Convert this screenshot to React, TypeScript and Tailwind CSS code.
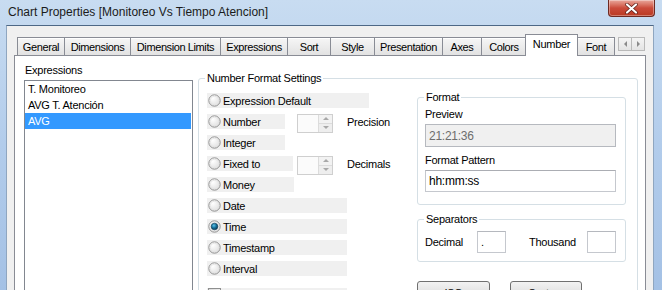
import React from 'react';

const tabs = [
  { name: 'General', w: 'w-[48px]' },
  { name: 'Dimensions', w: 'w-[67px]' },
  { name: 'Dimension Limits', w: 'w-[91px]' },
  { name: 'Expressions', w: 'w-[68px]' },
  { name: 'Sort', w: 'w-[44px]' },
  { name: 'Style', w: 'w-[45px]' },
  { name: 'Presentation', w: 'w-[69px]' },
  { name: 'Axes', w: 'w-[40px]' },
  { name: 'Colors', w: 'w-[46px]' },
];

const formats = [
  { name: 'Expression Default', w: 'w-[162px]' },
  { name: 'Number', w: 'w-[78px]', spin: 'Precision' },
  { name: 'Integer', w: 'w-[78px]' },
  { name: 'Fixed to', w: 'w-[86px]', spin: 'Decimals' },
  { name: 'Money', w: 'w-[87px]' },
  { name: 'Date', w: 'w-[140px]' },
  { name: 'Time', w: 'w-[140px]', checked: true },
  { name: 'Timestamp', w: 'w-[140px]' },
  { name: 'Interval', w: 'w-[140px]' },
];

function Radio({ checked }: { checked?: boolean }) {
  return (
    <svg width="13" height="13" viewBox="0 0 13 13" className="shrink-0">
      <defs>
        <radialGradient id="rg" cx="0.35" cy="0.3" r="0.8">
          <stop offset="0" stopColor="#ffffff" />
          <stop offset="1" stopColor="#dcdcdc" />
        </radialGradient>
        <radialGradient id="dot" cx="0.4" cy="0.35" r="0.7">
          <stop offset="0" stopColor="#5fc3e8" />
          <stop offset="0.5" stopColor="#16729c" />
          <stop offset="1" stopColor="#0a3550" />
        </radialGradient>
      </defs>
      <circle cx="6.5" cy="6.5" r="5.7" fill="url(#rg)" stroke="#8b8b8b" strokeWidth="0.9" />
      <circle cx="6.5" cy="6.5" r="4.2" fill="none" stroke="#e2e2e2" strokeWidth="0.8" />
      {checked && <circle cx="6.5" cy="6.5" r="3.3" fill="url(#dot)" stroke="#0b3b55" strokeWidth="0.6" />}
    </svg>
  );
}

function Spinner() {
  return (
    <div className="ml-[4px] mt-[3px] flex h-[19px] w-[36px] border border-[#cfcfcf] bg-[#fbfbfb]">
      <div className="flex-1" />
      <div className="flex w-[14px] flex-col border-l border-[#dcdcdc]">
        <div className="flex flex-1 items-center justify-center border-b border-[#dcdcdc] bg-[#f2f2f2]">
          <span className="h-0 w-0 border-x-[3px] border-b-[3px] border-x-transparent border-b-[#a8a8a8]" />
        </div>
        <div className="flex flex-1 items-center justify-center bg-[#eeeeee]">
          <span className="h-0 w-0 border-x-[3px] border-t-[3px] border-x-transparent border-t-[#a8a8a8]" />
        </div>
      </div>
    </div>
  );
}

export default function App() {
  return (
    <div className="flex h-[290px] w-[662px] flex-col overflow-hidden bg-gradient-to-b from-[#c8dcf1] via-[#b2cceb] to-[#a4c1e5] font-['Liberation_Sans',Arial,sans-serif] text-[11px] leading-[14px] tracking-[-0.25px] text-black">
      {/* Title bar */}
      <div className="flex h-[25px] shrink-0 items-start">
        <div className="ml-[8px] mt-[4px] text-[12px] leading-[16px] tracking-normal text-[#1b1b1b]">
          Chart Properties [Monitoreo Vs Tiempo Atencion]
        </div>
        <div className="ml-auto mr-[7px] flex h-[17px] w-[47px] items-center justify-center rounded-b-[4px] border border-t-0 border-[#6e2a22] bg-gradient-to-b from-[#e8a79c] via-[#cb4b3b] to-[#b93a22] shadow-[inset_0_0_0_1px_rgba(255,255,255,0.35)]">
          <svg width="13" height="11" viewBox="0 0 13 11">
            <path d="M2 1.5 L11 9.5 M11 1.5 L2 9.5" stroke="#5a1d16" strokeWidth="3.6" strokeLinecap="round" />
            <path d="M2 1.5 L11 9.5 M11 1.5 L2 9.5" stroke="#ffffff" strokeWidth="2.2" strokeLinecap="round" />
          </svg>
        </div>
      </div>

      {/* Client area */}
      <div className="ml-[6px] mr-[8px] flex flex-1 flex-col border-x border-t border-x-[#8fa6c0] border-t-[#4d6886] bg-[#f0f0f0] px-[7px] pt-[8px]">
        {/* Tab strip */}
        <div className="flex h-[21px] items-end pl-[3px]">
          {tabs.map((t, i) => (
            <div
              key={t.name}
              className={`${t.w} ${i > 0 ? '-ml-px' : ''} flex h-[18px] items-center justify-center border border-b-0 border-[#898c95] bg-gradient-to-b from-[#f6f6f6] to-[#e2e2e2] tracking-[-0.4px] shadow-[inset_0_1px_0_#ffffff]`}
            >
              {t.name}
            </div>
          ))}
          <div className="relative z-10 -mb-px -ml-[2px] flex h-[22px] w-[53px] items-start justify-center border border-b-0 border-[#898c95] bg-white pt-[2px] tracking-[-0.3px]">
            Number
          </div>
          <div className="-ml-px flex h-[18px] w-[38px] items-center justify-center border border-b-0 border-[#898c95] bg-gradient-to-b from-[#f6f6f6] to-[#e2e2e2] tracking-[-0.4px] shadow-[inset_0_1px_0_#ffffff]">
            Font
          </div>
          <div className="mb-[4px] ml-auto mr-px flex self-end">
            <div className="flex h-[14px] w-[14px] items-center justify-center border border-[#b9b9b9] bg-gradient-to-b from-[#f4f4f4] to-[#e4e4e4]">
              <span className="h-0 w-0 border-y-[3px] border-r-[3px] border-y-transparent border-r-[#8a8a8a]" />
            </div>
            <div className="-ml-px flex h-[14px] w-[14px] items-center justify-center border border-[#b9b9b9] bg-gradient-to-b from-[#f4f4f4] to-[#e4e4e4]">
              <span className="h-0 w-0 border-y-[3px] border-l-[3px] border-y-transparent border-l-[#8a8a8a]" />
            </div>
          </div>
        </div>

        {/* Tab panel */}
        <div className="flex flex-1 items-start border border-b-0 border-[#898c95] bg-white">
          {/* Expressions list */}
          <div className="ml-[9px] flex flex-col pt-[7px]">
            <div className="pl-px">Expressions</div>
            <div className="mt-[3px] h-[260px] w-[169px] border border-[#828790] bg-white py-0">
              <div className="flex h-[16px] items-center pl-[3px]">T. Monitoreo</div>
              <div className="flex h-[16px] items-center pl-[3px]">AVG T. Atención</div>
              <div className="mr-px flex h-[16px] items-center bg-[#3399ff] pl-[3px] text-white">AVG</div>
            </div>
          </div>

          {/* Number Format Settings */}
          <fieldset className="ml-[5px] mt-[15px] h-[300px] w-[440px] rounded-[3px] border border-[#d5dfe5] p-0">
            <legend className="ml-[6px] px-[2px] leading-[14px]">Number Format Settings</legend>
            <div className="flex pl-[8px] pt-[5px]">
              <div className="flex w-[210px] flex-col">
                {formats.map((f) => (
                  <div key={f.name} className="flex h-[21px] items-center">
                    <div className={`${f.w} flex h-[15px] items-center bg-[#f0f0f0] pl-px`}>
                      <Radio checked={f.checked} />
                      <span className="ml-[2px]">{f.name}</span>
                    </div>
                    {f.spin && (
                      <>
                        <div className={f.name === 'Number' ? 'ml-[8px]' : ''}>
                          <Spinner />
                        </div>
                        <span className="ml-[14px]">{f.spin}</span>
                      </>
                    )}
                  </div>
                ))}
                <div className="mt-[9px] flex h-[15px] w-[140px] items-start bg-[#f0f0f0] pl-px">
                  <div className="h-[13px] w-[13px] border border-[#8e8f8f] bg-gradient-to-br from-[#dcdcdc] to-white" />
                </div>
              </div>

              <div className="flex w-[209px] flex-col">
                <fieldset className="rounded-[3px] border border-[#d5dfe5] p-0">
                  <legend className="ml-[6px] px-[2px] leading-[14px]">Format</legend>
                  <div className="flex flex-col pb-[12px] pl-[7px] pr-[9px]">
                    <div className="mt-[3px]">Preview</div>
                    <div className="mt-[3px] flex h-[23px] items-center border border-[#b6b9bf] bg-[#f0f0f0] pl-[3px] text-[12px] text-[#6d6d6d]">
                      21:21:36
                    </div>
                    <div className="mt-[6px]">Format Pattern</div>
                    <div className="mt-[3px] flex h-[22px] items-center border border-[#c5c8ce] border-t-[#abadb3] bg-white pl-[3px] text-[12px]">
                      hh:mm:ss
                    </div>
                  </div>
                </fieldset>

                <fieldset className="mt-[7px] rounded-[3px] border border-[#d5dfe5] p-0">
                  <legend className="ml-[6px] px-[2px] leading-[14px]">Separators</legend>
                  <div className="mt-[5px] flex items-center pb-[8px] pl-[7px]">
                    <span className="w-[52px]">Decimal</span>
                    <div className="flex h-[22px] w-[29px] items-center border border-[#c5c8ce] border-t-[#b5b8be] bg-white pl-[3px]">.</div>
                    <span className="ml-[23px] w-[58px]">Thousand</span>
                    <div className="h-[22px] w-[29px] border border-[#c5c8ce] border-t-[#b5b8be] bg-white" />
                  </div>
                </fieldset>

                <div className="mt-[19px] flex">
                  <div className="flex h-[23px] w-[73px] items-center justify-center rounded-[3px] border border-[#707070] bg-gradient-to-b from-[#f2f2f2] to-[#d4d4d4]">ISO</div>
                  <div className="ml-[20px] flex h-[23px] w-[72px] items-center justify-center rounded-[3px] border border-[#707070] bg-gradient-to-b from-[#f2f2f2] to-[#d4d4d4]">System</div>
                </div>
              </div>
            </div>
          </fieldset>
        </div>
      </div>
    </div>
  );
}
